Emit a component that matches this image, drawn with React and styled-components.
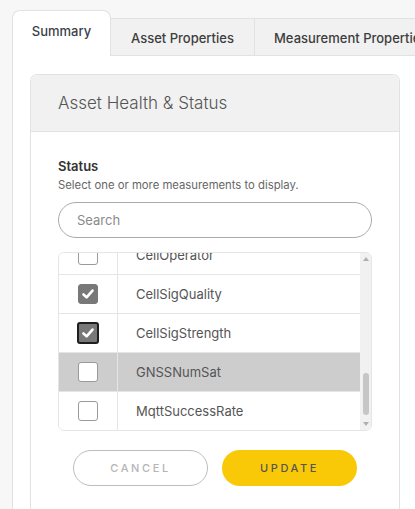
import React from "react"
import styled, { createGlobalStyle } from "styled-components"

const GlobalStyle = createGlobalStyle`
  html, body {
    margin: 0;
    padding: 0;
    background: #f7f7f7;
    overflow: hidden;
    font-family: Inter, "Open Sans", sans-serif;
  }
`

const Page = styled.div`
  padding: 10px 0 0 12px;
  width: 403px;
  overflow: hidden;
`

const TabBar = styled.div`
  display: flex;
  align-items: flex-end;
  white-space: nowrap;
  overflow: hidden;
`

const Tab = styled.div`
  box-sizing: border-box;
  display: flex;
  align-items: center;
  justify-content: ${(p) => (p.$clip ? "flex-start" : "center")};
  overflow: hidden;
  font-size: 13px;
  font-weight: 500;
  color: ${(p) => (p.$active ? "#3a3f4a" : "#3d3d3d")};
  background: ${(p) => (p.$active ? "#ffffff" : "#f1f1f1")};
  border: 1px solid #e2e2e2;
  border-left: ${(p) => (p.$active ? "1px solid #e2e2e2" : "none")};
  border-right: ${(p) => (p.$clip ? "none" : "1px solid #e2e2e2")};
  border-bottom: ${(p) => (p.$active ? "none" : "1px solid #e2e2e2")};
  border-radius: ${(p) => (p.$active ? "8px 8px 0 0" : "0")};
  height: ${(p) => (p.$active ? "46px" : "38px")};
  padding: ${(p) => (p.$active ? "0 0 6px" : p.$clip ? "2px 0 0 19px" : "2px 0 0")};
  width: ${(p) => (p.$width ? `${p.$width}px` : "auto")};
  flex: ${(p) => (p.$clip ? "1" : "0 0 auto")};
`

const Panel = styled.div`
  box-sizing: border-box;
  background: #ffffff;
  border-left: 1px solid #e2e2e2;
  padding: 18px 0 0 17px;
  height: 460px;
`

const Card = styled.div`
  box-sizing: border-box;
  width: 370px;
  border: 1px solid #e2e2e2;
  border-bottom: none;
  border-radius: 7px 7px 0 0;
  height: 450px;
`

const CardHeader = styled.div`
  background: #f1f1f1;
  border-bottom: 1px solid #e2e2e2;
  border-radius: 7px 7px 0 0;
  height: 56px;
  display: flex;
  align-items: center;
  padding: 0 27px;
  font-size: 17px;
  font-weight: 300;
  color: #555;
`

const CardBody = styled.div`
  padding: 26px 27px 0;
`

const Label = styled.div`
  font-size: 13px;
  font-weight: 600;
  color: #333;
  line-height: 16px;
`

const Hint = styled.div`
  font-size: 11.3px;
  color: #666;
  margin-top: 4px;
  line-height: 14px;
`

const SearchInput = styled.input`
  box-sizing: border-box;
  display: block;
  width: 100%;
  height: 36px;
  margin-top: 10px;
  border: 1px solid #aaa;
  border-radius: 18px;
  padding: 0 18px;
  font-family: inherit;
  font-size: 13px;
  color: #444;
  outline: none;
  &::placeholder {
    color: #8a8a8a;
  }
`

const ListBox = styled.div`
  box-sizing: border-box;
  margin-top: 14px;
  height: 179px;
  border: 1px solid #e5e5e5;
  border-radius: 6px;
  display: flex;
  overflow: hidden;
`

const Rows = styled.div`
  flex: 1;
  overflow-y: auto;
  scrollbar-width: none;
  &::-webkit-scrollbar {
    display: none;
  }
`

const Row = styled.div`
  display: flex;
  height: 38px;
  border-bottom: 1px solid #e5e5e5;
  background: ${(p) => (p.$hover ? "#cdcdcd" : "#fff")};
  &:last-child {
    border-bottom: none;
  }
`

const CheckCell = styled.div`
  width: 58px;
  border-right: 1px solid #e5e5e5;
  display: flex;
  align-items: center;
  justify-content: center;
`

const Box = styled.div`
  box-sizing: border-box;
  width: ${(p) => (p.$focus ? "22px" : "20px")};
  height: ${(p) => (p.$focus ? "22px" : "20px")};
  border-radius: 3px;
  background: ${(p) => (p.$checked ? "#787878" : "#fff")};
  border: ${(p) => (p.$focus ? "2px solid #1e1e1e" : p.$checked ? "1px solid #787878" : "1px solid #9a9a9a")};
  display: flex;
  align-items: center;
  justify-content: center;
`

const RowText = styled.div`
  display: flex;
  align-items: center;
  padding-left: 18px;
  font-size: 13px;
  color: #555;
`

const ScrollTrack = styled.div`
  width: 11px;
  background: #f1f1f1;
  display: flex;
  flex-direction: column;
  align-items: center;
  padding: 4px 0;
`

const Arrow = styled.div`
  width: 0;
  height: 0;
  border-left: 3px solid transparent;
  border-right: 3px solid transparent;
  ${(p) => (p.$up ? "border-bottom: 4px solid #b0b0b0;" : "border-top: 4px solid #b0b0b0;")}
`

const Thumb = styled.div`
  width: 6px;
  height: 42px;
  border-radius: 3px;
  background: #c6c6c6;
  margin-top: auto;
  margin-bottom: 7px;
`

const Buttons = styled.div`
  display: flex;
  justify-content: center;
  gap: 14px;
  margin-top: 19px;
`

const Button = styled.button`
  box-sizing: border-box;
  width: 135px;
  height: 36px;
  border-radius: 18px;
  font-family: inherit;
  font-size: 11px;
  font-weight: 500;
  letter-spacing: 2.6px;
  border: ${(p) => (p.$primary ? "none" : "1px solid #bdbdbd")};
  background: ${(p) => (p.$primary ? "#f9c806" : "#fff")};
  color: ${(p) => (p.$primary ? "#555" : "#b5b5b5")};
`

const Check = () => (
  <svg width="14" height="14" viewBox="0 0 14 14">
    <path d="M2.5 7.5 L5.6 10.4 L11.5 3.6" fill="none" stroke="#fff" strokeWidth="2.6" strokeLinecap="round" strokeLinejoin="round" />
  </svg>
)

const items = [
  { name: "BatteryLevel" },
  { name: "BatteryVoltage" },
  { name: "BoardTemp" },
  { name: "CellBand" },
  { name: "CellId" },
  { name: "CellLac" },
  { name: "CellMcc" },
  { name: "CellMnc" },
  { name: "CellNetwork" },
  { name: "CellOperator" },
  { name: "CellSigQuality", checked: true },
  { name: "CellSigStrength", checked: true, focus: true },
  { name: "GNSSNumSat", hover: true },
  { name: "MqttSuccessRate" },
]

export default function App() {
  const rows = React.useRef(null)

  React.useEffect(() => {
    const el = rows.current
    if (el) el.scrollTop = el.scrollHeight - el.clientHeight
  }, [])

  return (
    <Page>
      <GlobalStyle />
      <TabBar>
        <Tab $active $width={99}>Summary</Tab>
        <Tab $width={144}>Asset Properties</Tab>
        <Tab $clip>Measurement Properties</Tab>
      </TabBar>
      <Panel>
        <Card>
          <CardHeader>Asset Health &amp; Status</CardHeader>
          <CardBody>
            <Label>Status</Label>
            <Hint>Select one or more measurements to display.</Hint>
            <SearchInput placeholder="Search" />
            <ListBox>
              <Rows ref={rows}>
                {items.map((it) => (
                  <Row key={it.name} $hover={it.hover}>
                    <CheckCell>
                      <Box $checked={it.checked} $focus={it.focus}>
                        {it.checked && <Check />}
                      </Box>
                    </CheckCell>
                    <RowText>{it.name}</RowText>
                  </Row>
                ))}
              </Rows>
              <ScrollTrack>
                <Arrow $up />
                <Thumb />
                <Arrow />
              </ScrollTrack>
            </ListBox>
            <Buttons>
              <Button>CANCEL</Button>
              <Button $primary>UPDATE</Button>
            </Buttons>
          </CardBody>
        </Card>
      </Panel>
    </Page>
  )
}
